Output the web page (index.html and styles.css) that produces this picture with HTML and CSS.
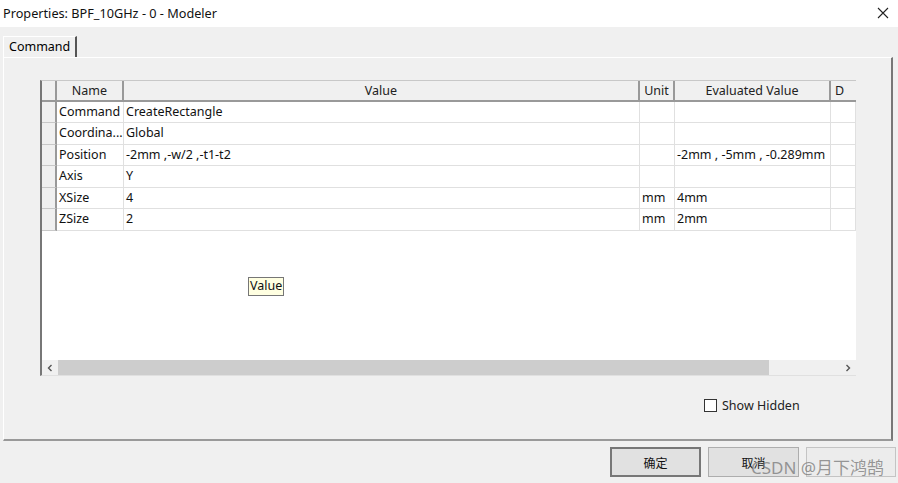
FILE: index.html
```html
<!DOCTYPE html>
<html>
<head>
<meta charset="utf-8">
<link rel="stylesheet" href="styles.css">
</head>
<body>
<div class="titlebar">
  <span class="title">Properties: BPF_10GHz - 0 - Modeler</span>
  <svg class="close" width="12" height="12" viewBox="0 0 12 12"><path d="M1 1 L11 11 M11 1 L1 11" stroke="#222" stroke-width="1.1" fill="none"/></svg>
</div>
<div class="tabs"><div class="tab">Command</div></div>
<div class="panel">
  <div class="gridwrap">
    <div class="grid">
      <div class="rh hdr"></div><div class="hc">Name</div><div class="hc">Value</div><div class="hc">Unit</div><div class="hc">Evaluated Value</div><div class="hc left">D</div>
      <div class="rh"></div><div class="c">Command</div><div class="c">CreateRectangle</div><div class="c"></div><div class="c"></div><div class="c"></div>
      <div class="rh"></div><div class="c">Coordina...</div><div class="c">Global</div><div class="c"></div><div class="c"></div><div class="c"></div>
      <div class="rh"></div><div class="c">Position</div><div class="c">-2mm ,-w/2 ,-t1-t2</div><div class="c"></div><div class="c">-2mm , -5mm , -0.289mm</div><div class="c"></div>
      <div class="rh"></div><div class="c">Axis</div><div class="c">Y</div><div class="c"></div><div class="c"></div><div class="c"></div>
      <div class="rh"></div><div class="c">XSize</div><div class="c">4</div><div class="c">mm</div><div class="c">4mm</div><div class="c"></div>
      <div class="rh"></div><div class="c">ZSize</div><div class="c">2</div><div class="c">mm</div><div class="c">2mm</div><div class="c"></div>
    </div>
    <div class="empty"></div>
    <div class="hscroll">
      <div class="arrow"><svg width="8" height="8" viewBox="0 0 8 8"><path d="M5.5 1 L2.5 4 L5.5 7" stroke="#555" stroke-width="1.4" fill="none"/></svg></div>
      <div class="thumb"></div>
      <div class="track"></div>
      <div class="arrow"><svg width="8" height="8" viewBox="0 0 8 8"><path d="M2.5 1 L5.5 4 L2.5 7" stroke="#555" stroke-width="1.4" fill="none"/></svg></div>
    </div>
    <div class="tooltip">Value</div>
  </div>
  <div class="showrow">
    <span class="check"></span><span>Show Hidden</span>
  </div>
</div>
<div class="buttons">
  <div class="btn default">确定</div>
  <div class="btn">取消</div>
  <div class="btn faint"></div>
  <div class="watermark">CSDN @月下鸿鹄</div>
</div>
</body>
</html>
```
FILE: styles.css
```css
* { box-sizing: border-box; }
html, body { margin: 0; padding: 0; }
body {
  width: 898px;
  height: 483px;
  background: #f0f0f0;
  font-family: "Noto Sans", "Noto Sans CJK SC", sans-serif;
  font-size: 12.5px;
  color: #000;
  overflow: hidden;
  position: relative;
}
.titlebar {
  height: 27px;
  background: #fff;
  display: flex;
  align-items: center;
  justify-content: space-between;
  padding: 0 9px 2px 3px;
}
.title { font-size: 12.7px; color: #111; }
.close { display: block; margin-top: 1px; }
.tabs {
  padding: 9px 0 0 3px;
  height: 30px;
  display: flex;
  align-items: flex-end;
}
.tab {
  height: 21px;
  width: 74px;
  padding: 1px 0 0 5px;
  border-left: 1px solid #fff;
  border-top: 1px solid #fff;
  border-right: 2px solid #555;
  font-size: 12.5px;
  background: #f0f0f0;
}
.panel {
  margin: 0 5px 0 3px;
  height: 384px;
  border-left: 1px solid #fff;
  border-top: 1px solid #fff;
  border-right: 2px solid #777;
  border-bottom: 2px solid #999;
  padding: 22px 0 0 36px;
  display: flex;
  flex-direction: column;
}
.gridwrap {
  width: 816px;
  height: 296px;
  position: relative;
  border-left: 2px solid #777;
  border-top: 1px solid #c8c8c8;
  border-bottom: 1px solid #e0e0e0;
  display: flex;
  flex-direction: column;
  background: #fff;
}
.grid {
  display: grid;
  grid-template-columns: 15px 67px 516px 35px 156px 25px;
  grid-template-rows: 20.5px repeat(6, 21.5px);
  overflow: hidden;
  width: 814px;
}
.rh {
  background: #f0f0f0;
  border-right: 2px solid #999;
  border-bottom: 1px solid #c8c8c8;
}
.rh.hdr { border-bottom: 2px solid #999; }
.hc {
  background: #f0f0f0;
  border-right: 2px solid #999;
  border-bottom: 2px solid #999;
  text-align: center;
  line-height: 19px;
  color: #222;
  white-space: nowrap;
  overflow: hidden;
}
.hc.left { text-align: left; padding-left: 4px; border-right: none; }
.c {
  border-right: 1px solid #e0e0e0;
  border-bottom: 1px solid #e0e0e0;
  padding-left: 2px;
  line-height: 20.5px;
  white-space: nowrap;
  overflow: hidden;
  color: #111;
}
.empty { flex: 1; }
.hscroll {
  height: 15px;
  display: flex;
  background: #f0f0f0;
}
.arrow {
  width: 16px;
  display: flex;
  align-items: center;
  justify-content: center;
}
.thumb { width: 711px; background: #cdcdcd; }
.track { flex: 1; }
.tooltip {
  position: absolute;
  left: 206px;
  top: 196px;
  height: 19px;
  padding: 0 1px;
  background: #ffffe1;
  border: 1px solid #767676;
  line-height: 16px;
  font-size: 12.5px;
  color: #111;
}
.showrow {
  display: flex;
  align-items: center;
  gap: 5px;
  margin: 21px 0 0 664px;
  color: #222;
}
.check {
  width: 13px;
  height: 13px;
  background: #fff;
  border: 1px solid #333;
}
.buttons {
  position: relative;
  display: flex;
  gap: 7px;
  padding: 6px 0 0 610px;
}
.btn {
  width: 91px;
  height: 30px;
  border: 1px solid #adadad;
  background: #e1e1e1;
  display: flex;
  align-items: center;
  justify-content: center;
  font-family: "Noto Sans CJK SC", sans-serif;
  font-size: 12px;
  color: #111;
}
.btn.default { border: 2px solid #777; }
.btn.faint { background: #ececec; border-color: #c4c4c4; width: 90px; }
.watermark {
  position: absolute;
  left: 751px;
  top: 13px;
  font-family: "Noto Sans", "Noto Sans CJK SC", sans-serif;
  font-size: 17px;
  color: rgba(120, 120, 120, 0.75);
  white-space: nowrap;
}
```
